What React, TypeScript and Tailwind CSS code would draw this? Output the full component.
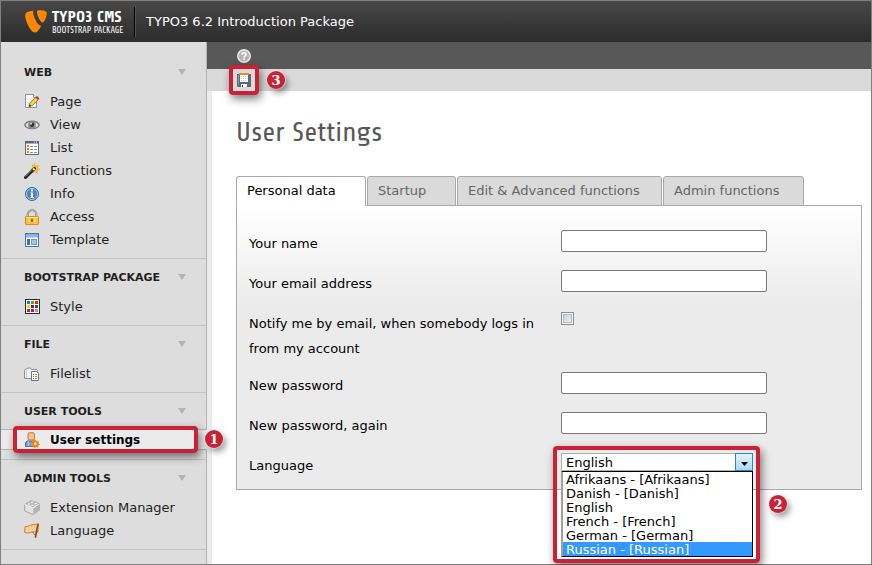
import React, { useState } from "react";

type IconProps = { className?: string };

function Svg({ children }: { children: React.ReactNode }) {
  return (
    <svg className="h-4 w-4 shrink-0" viewBox="0 0 16 16" aria-hidden="true">
      {children}
    </svg>
  );
}

const PageIcon = () => (
  <Svg>
    <path d="M1.500.500h8l3 3v10h-11z" fill="#fbfcfd" stroke="#8a929b" />
    <path d="M3 11l6-7v8H3z" fill="#dfe5ea" />
    <path d="M9.500.500v3h3" fill="#fff" stroke="#8a929b" />
    <path d="M5 12.500l1-3.500L12 3l2.500 2.500-6 6z" fill="#f5d33c" stroke="#8c6a1c" strokeWidth=".8" />
    <path d="M11.500 3.500l1.500-1.500 2.300 2.300L13.800 5.800z" fill="#c8262b" />
    <path d="M5 12.800l.6-2.200 1.600 1.600z" fill="#222" />
  </Svg>
);

const ViewIcon = () => (
  <Svg>
    <path d="M.7 8C3 3 13 3 15.300 8 13 12.800 3 12.800.7 8z" fill="#e3e3e3" stroke="#777" strokeWidth="1.300" />
    <circle cx="8" cy="7.800" r="3.900" fill="#8c8f92" />
    <circle cx="8" cy="7.800" r="2.300" fill="#33383d" />
    <circle cx="7" cy="6.800" r="1" fill="#dde3e8" />
  </Svg>
);

const ListIcon = () => (
  <Svg>
    <rect x="1.500" y="1.500" width="13" height="13" fill="#fff" stroke="#666b78" />
    <path d="M1 1h14v2.500H1z" fill="#59627a" />
    <path d="M10 1.500h1v1h-1zM12 1.500h1v1h-1z" fill="#fff" />
    <path d="M3 5h2v2H3zM3 8h2v2H3zM3 11h2v2H3z" fill="#ef7d1a" />
    <path d="M6 6.500h7M6 9.500h7M6 12.500h7" stroke="#8c93a0" strokeDasharray="3 1" />
  </Svg>
);

const WandIcon = () => (
  <Svg>
    <path d="M10.500.500l1 3 3-1.500-1 3 2.300 1.500-3 .8.700 3-2.500-1.800-2.300 1.700.3-3-2.500-1 2.700-1.200L8 2l2 1z" fill="#ffc321" stroke="#e89b10" strokeWidth=".5" />
    <path d="M1.500 14.500l9-9" stroke="#1d1d1d" strokeWidth="3" strokeLinecap="round" />
    <path d="M1.500 13.700l6.500-6.500" stroke="#999" strokeWidth=".8" />
    <path d="M9 7l1.500-1.500" stroke="#fff3c0" strokeWidth="2" />
  </Svg>
);

const InfoIcon = () => (
  <Svg>
    <circle cx="8" cy="8" r="6.500" fill="#4e85c0" stroke="#3a6ba8" />
    <circle cx="8" cy="8" r="5.500" fill="none" stroke="#a9c6e4" />
    <path d="M7 3.500h2v2H7zM6.500 6.500H9V11h1v1H6.500v-1H7V7.500h-.5z" fill="#fff" />
  </Svg>
);

const LockIcon = () => (
  <Svg>
    <path d="M3.700 8V5.500a4.300 4.300 0 018.600 0V8" fill="none" stroke="#8d8d8d" strokeWidth="2.200" />
    <path d="M3.700 8V5.500a4.300 4.300 0 018.600 0V8" fill="none" stroke="#c9c9c9" strokeWidth=".8" />
    <rect x="1.500" y="7.500" width="13" height="8" rx=".5" fill="#f8c03d" stroke="#e08d13" />
    <path d="M2 8.500h12" stroke="#ffe9a8" />
    <path d="M4 10.500h2M4 12.500h2M10 10.500h2M10 12.500h2" stroke="#fff0be" />
    <path d="M7 10h2v3H7z" fill="#a86d12" />
  </Svg>
);

const TemplateIcon = () => (
  <Svg>
    <rect x="1.500" y="1.500" width="13" height="13" fill="#fff" stroke="#4275b4" />
    <path d="M2 2h12v3.500H2z" fill="#8fb5df" />
    <path d="M3 7h3v6H3z" fill="#3d6fac" />
    <rect x="7.500" y="7.500" width="5" height="5" fill="#a9c5e6" stroke="#6b97cb" />
  </Svg>
);

const StyleIcon = () => (
  <Svg>
    <rect x="1.500" y=".5" width="14" height="14" fill="#fff" stroke="#2b2b2b" />
    <path d="M3 2h3v3H3z" fill="#0a85d1" />
    <path d="M7 2h3v3H7z" fill="#6aa80f" />
    <path d="M11 2h3v3h-3z" fill="#ee1c1c" />
    <path d="M3 6h3v3H3z" fill="#f8d400" />
    <path d="M7 6h3v3H7z" fill="#58256b" />
    <path d="M11 6h3v3h-3z" fill="#4a4a4a" />
    <path d="M3 10h3v3H3z" fill="#a5381e" />
    <path d="M7 10h3v3H7z" fill="#d5007f" />
    <path d="M11 10h3v3h-3z" fill="#a39c86" />
  </Svg>
);

const FilelistIcon = () => (
  <Svg>
    <path d="M.5 12.500v-8l1-1.500h1l1-1h3l1 1.500h5l1 1v8z" fill="#f1f2f5" stroke="#8c9099" />
    <path d="M2.500 12V4" stroke="#c8ccd4" />
    <path d="M7.500 5.500h5l2 2v7h-7z" fill="#fff" stroke="#6e727a" />
    <path d="M9 8h1v1H9zM9 10h1v1H9zM9 12h1v1H9z" fill="#5f8a2c" />
    <path d="M11 8h2v1h-2zM11 10h2v1h-2zM11 12h2v1h-2z" fill="#d8842c" />
  </Svg>
);

const UserIcon = () => (
  <Svg>
    <path d="M1.500 14.500v-3.500l1.500-2h8l1.500 2v3.500z" fill="#74a3d6" stroke="#456fa5" />
    <path d="M4.500 9.500V14" stroke="#b8d2ee" />
    <rect x="4" y=".8" width="6.500" height="7.200" rx="1.500" fill="#f4c38b" stroke="#b77a3c" />
    <path d="M11.500 7.500l1.300 1.700 2.200.3-.3 2 1.300.8-1.600 1.200-.3 2-2-.4-1.400 1-1.300-1.500-2-.3.400-2-1-1.300 1.600-.9.200-1.900 2 .2z" fill="#f38a13" />
    <circle cx="11.300" cy="11.800" r="2" fill="#ffd9a0" stroke="#d96c08" strokeWidth=".7" />
  </Svg>
);

const BrickIcon = () => (
  <Svg>
    <path d="M.7 4.500L7 .7l8.300 3v6.500L9 14.500.7 11z" fill="#e2e2e2" stroke="#a5a5a5" />
    <path d="M9.300 7.500v7l6-4.300V4z" fill="#b5b5b5" />
    <path d="M.7 4.700l8.600 2.800 6-3.500" fill="none" stroke="#fff" strokeWidth=".8" />
    <g fill="#fafafa" stroke="#999" strokeWidth=".7">
      <ellipse cx="4.800" cy="4" rx="1.800" ry="1.200" />
      <ellipse cx="8" cy="2.200" rx="1.800" ry="1.200" />
      <ellipse cx="8.500" cy="5.400" rx="1.800" ry="1.200" />
      <ellipse cx="12" cy="3.600" rx="1.800" ry="1.200" />
    </g>
  </Svg>
);

const FlagIcon = () => (
  <Svg>
    <path d="M1 3.500C4 4.300 6 .8 14 1.300v7.500C9 8 6 11 .7 9.500z" fill="#ffc890" stroke="#dc7b26" />
    <path d="M3.500 5v4M6.500 4v5M9.500 3v5" stroke="#fce3c5" />
    <path d="M14 1.500L11.500 14" stroke="#8c5328" strokeWidth="1.800" strokeLinecap="round" />
    <path d="M8 8.500l3 3.500" stroke="#b36a2b" />
  </Svg>
);

const SaveIcon = () => (
  <Svg>
    <path d="M1 2h14v13H2l-1-1z" fill="#5c6779" />
    <path d="M2 3h1v10H2z" fill="#8e99a9" />
    <path d="M4 3h8v7H4z" fill="#fff" />
    <path d="M3 1h10v2H3z" fill="#f28a0f" />
    <path d="M5 4.500h6M5 6.500h6M5 8.500h6" stroke="#c4cbd5" strokeDasharray="1 1" />
    <path d="M5 12h6v3H5z" fill="#fff" />
    <path d="M6 13h1v2H6z" fill="#30353e" />
  </Svg>
);

const HelpIcon = () => (
  <Svg>
    <circle cx="8" cy="8" r="7" fill="#e4e4e4" />
    <circle cx="8" cy="8" r="5.300" fill="#b4b4b4" />
    <path d="M6 6.700C6 4 10 4.200 10 6.500c0 1.300-1.900 1.500-1.900 3M8.100 10.500v1.500" fill="none" stroke="#fff" strokeWidth="1.600" />
  </Svg>
);

const Typo3Mark = () => (
  <svg className="h-[23px] w-[23px] shrink-0" viewBox="0 0 23 23" aria-hidden="true">
    <path
      d="M16.200 15.400c-.3.100-.6.100-.9.100-2.900 0-7.200-9.900-7.200-13.200 0-1.200.3-1.600.7-1.900C5.300.8 1.200 2.100.7 3.400.3 3.900.2 4.700.2 5.600c0 5.200 5.600 17 9.500 17 1.900 0 4.900-3 6.500-7.200z"
      fill="#ff8700"
    />
    <path
      d="M14.300.2c3.700 0 7.500.6 7.500 2.700 0 4.300-2.700 9.500-4.100 9.500-2.500 0-5.700-7-5.700-10.500 0-1.500.6-1.700 2.300-1.700z"
      fill="#ff8700"
    />
  </svg>
);

const sections = [
  {
    title: "WEB",
    items: [
      { label: "Page", Icon: PageIcon },
      { label: "View", Icon: ViewIcon },
      { label: "List", Icon: ListIcon },
      { label: "Functions", Icon: WandIcon },
      { label: "Info", Icon: InfoIcon },
      { label: "Access", Icon: LockIcon },
      { label: "Template", Icon: TemplateIcon },
    ],
  },
  { title: "BOOTSTRAP PACKAGE", items: [{ label: "Style", Icon: StyleIcon }] },
  { title: "FILE", items: [{ label: "Filelist", Icon: FilelistIcon }] },
  { title: "USER TOOLS", items: [{ label: "User settings", Icon: UserIcon }] },
  {
    title: "ADMIN TOOLS",
    items: [
      { label: "Extension Manager", Icon: BrickIcon },
      { label: "Language", Icon: FlagIcon },
    ],
  },
];

const languages = [
  "Afrikaans - [Afrikaans]",
  "Danish - [Danish]",
  "English",
  "French - [French]",
  "German - [German]",
  "Russian - [Russian]",
];

const tabs = [
  { label: "Personal data", width: "w-[130px]" },
  { label: "Startup", width: "w-[89px]" },
  { label: "Edit & Advanced functions", width: "w-[205px]" },
  { label: "Admin functions", width: "w-[141px]" },
];

function Highlight({ className }: IconProps) {
  return (
    <span
      className={`pointer-events-none absolute z-10 rounded-[4px] border-4 border-[#cb2135] shadow-[2px_4px_9px_rgba(0,0,0,0.5)] ${className}`}
    />
  );
}

function Step({ n, className }: { n: number; className: string }) {
  return (
    <span
      className={`absolute z-10 flex h-[18px] w-[18px] items-center justify-center rounded-full bg-[#cb2135] font-['DejaVu_Serif',serif] text-[13px] leading-none font-bold text-white shadow-[0_0_1px_1px_rgba(255,255,255,0.4),3px_4px_6px_rgba(0,0,0,0.4)] ${className}`}
    >
      {n}
    </span>
  );
}

function Sidebar() {
  return (
    <nav className="w-[206px] shrink-0 border-r border-[#b4b4b4] bg-[#dddddd] text-[#1f1f1f]">
      {sections.map((section, i) => (
        <section
          key={section.title}
          className={`border-b border-[#c3c3c3] pb-[7px] ${i === 0 ? "pt-5" : "pt-2"}`}
        >
          <h2 className="mb-2 flex h-5 items-center justify-between pr-5 pl-[23px] text-[11px] font-bold">
            <span className="pt-0.5">{section.title}</span>
            <svg className="h-[6px] w-2" viewBox="0 0 8 6" aria-hidden="true">
              <path d="M0 0h8L4 6z" fill="#b3b3b3" />
            </svg>
          </h2>
          <ul>
            {section.items.map(({ label, Icon }) =>
              label === "User settings" ? (
                <li key={label} className="relative -mr-px mb-[2px] h-[21px] border-y border-[#b4b4b4] bg-[#ebebeb]">
                  <a href="#user-settings" className="flex h-full items-center gap-[10px] pt-px pl-[23px] text-[12px] font-bold text-black">
                    <Icon />
                    {label}
                  </a>
                  <Highlight className="-top-1 right-[9px] left-3 h-[27px]" />
                  <Step n={1} className="top-0 -right-4" />
                </li>
              ) : (
                <li key={label}>
                  <a href="#module" className="flex h-[23px] items-center gap-[10px] pl-[23px]">
                    <Icon />
                    {label}
                  </a>
                </li>
              ),
            )}
          </ul>
        </section>
      ))}
    </nav>
  );
}

function Row({ id, label, children }: { id: string; label: string; children: React.ReactNode }) {
  return (
    <div className="flex min-h-10 items-start pt-[5px] pb-1.5">
      <div className="w-[312px] shrink-0 pt-px pr-6 leading-[25px]">
        <label htmlFor={id}>{label}</label>
      </div>
      {children}
    </div>
  );
}

const inputClass = "h-[22px] w-[206px] rounded-[2px] border border-[#7b7b7b] bg-white px-1 outline-none";

export default function App() {
  const [language, setLanguage] = useState("English");

  return (
    <div className="flex min-h-screen flex-col border border-[#808080] bg-white font-[Verdana,'DejaVu_Sans',sans-serif] text-[13px] text-black">
      <header className="flex h-[41px] items-center bg-linear-to-b from-[#484848] to-[#2c2c2c] pl-6 text-white">
        <Typo3Mark />
        <div className="ml-1 w-[82px] font-['Share','Roboto_Condensed','Open_Sans_Condensed',Roboto,sans-serif] whitespace-nowrap">
          <div className="text-[16px] leading-4 font-bold">TYPO3 CMS</div>
          <div className="text-[9px] leading-[10px]">BOOTSTRAP PACKAGE</div>
        </div>
        <div className="h-[30px] w-[2px] border-l border-black bg-[#555]" />
        <h1 className="ml-[10px]">TYPO3 6.2 Introduction Package</h1>
      </header>

      <div className="flex flex-1">
        <Sidebar />
        <div className="flex min-w-0 flex-1 flex-col">
          <div className="flex h-[27px] items-center bg-[#585858] pl-[29px]">
            <button type="button" aria-label="Help">
              <HelpIcon />
            </button>
          </div>
          <div className="flex h-[22px] items-center bg-[#dadada] pl-[29px]">
            <div className="relative">
              <button type="button" aria-label="Save" className="block">
                <SaveIcon />
              </button>
              <Highlight className="-inset-[7px]" />
              <Step n={3} className="-top-px left-[31px]" />
            </div>
          </div>

          <main className="flex-1 border-l-[5px] border-[#ebebeb] pt-6 pr-[9px] pl-6">
            <h2 className="h-[61px] font-['Share','Roboto_Condensed','Open_Sans_Condensed',Roboto,sans-serif] text-[28px] leading-[34px] text-[#585858]">
              User Settings
            </h2>

            <div role="tablist" className="relative flex gap-px">
              {tabs.map(({ label, width }, i) => (
                <button
                  key={label}
                  type="button"
                  role="tab"
                  aria-selected={i === 0}
                  className={`-mb-px h-[30px] rounded-t-[3px] border border-[#a9a9a9] pl-[10px] text-left whitespace-nowrap ${width} ${
                    i === 0 ? "border-b-white bg-white" : "bg-[#dadada] text-[#666]"
                  }`}
                >
                  {label}
                </button>
              ))}
            </div>

            <form className="border border-[#a9a9a9] bg-[linear-gradient(#ffffff,#ebebeb_100px)] pt-[19px] pb-[2px] pl-3">
              <Row id="name" label="Your name">
                <input id="name" type="text" className={inputClass} />
              </Row>
              <Row id="email" label="Your email address">
                <input id="email" type="email" className={inputClass} />
              </Row>
              <Row id="notify" label="Notify me by email, when somebody logs in from my account">
                <input
                  id="notify"
                  type="checkbox"
                  className="mt-0.5 h-[13px] w-[13px] appearance-none border border-[#8e8f8f] bg-linear-to-br from-[#c3c8ce] to-[#f8f8f8] shadow-[inset_0_0_0_1px_#f4f4f4,inset_0_0_0_2px_#b5bac0]"
                />
              </Row>
              <Row id="password" label="New password">
                <input id="password" type="password" className={inputClass} />
              </Row>
              <Row id="password2" label="New password, again">
                <input id="password2" type="password" className={inputClass} />
              </Row>
              <Row id="language" label="Language">
                <div className="relative mt-px w-[192px]">
                  <select
                    id="language"
                    value={language}
                    onChange={(e) => setLanguage(e.target.value)}
                    className="block h-[18px] w-full appearance-none border border-[#abadb3] bg-white pt-px pl-1 leading-4 outline-none"
                  >
                    {languages.map((l) => (
                      <option key={l}>{l}</option>
                    ))}
                  </select>
                  <span className="pointer-events-none absolute top-0 right-0 flex h-[18px] w-[18px] items-center justify-center border border-[#3c7fb1] bg-linear-to-b from-[#e5f4fc] to-[#a5d9f3] pt-1">
                    <svg className="h-1 w-[7px]" viewBox="0 0 7 4" aria-hidden="true">
                      <path d="M0 0h7L3.500 4z" fill="#000" />
                    </svg>
                  </span>
                  <ul
                    role="listbox"
                    aria-label="Language"
                    className="absolute top-[18px] left-0 z-10 w-full border border-l-2 border-black border-l-[#a0a0a0] bg-white"
                  >
                    {languages.map((l) => (
                      <li
                        key={l}
                        role="option"
                        aria-selected={l === language}
                        onClick={() => setLanguage(l)}
                        className={`h-[14px] pl-[3px] leading-4 whitespace-nowrap ${
                          l === "Russian - [Russian]" ? "bg-[#3399ff] text-white" : ""
                        }`}
                      >
                        {l}
                      </li>
                    ))}
                  </ul>
                  <Highlight className="-top-[7px] -left-2 h-[117px] w-[207px]" />
                  <Step n={2} className="top-[42px] left-[208px]" />
                </div>
              </Row>
            </form>
          </main>
        </div>
      </div>
    </div>
  );
}
